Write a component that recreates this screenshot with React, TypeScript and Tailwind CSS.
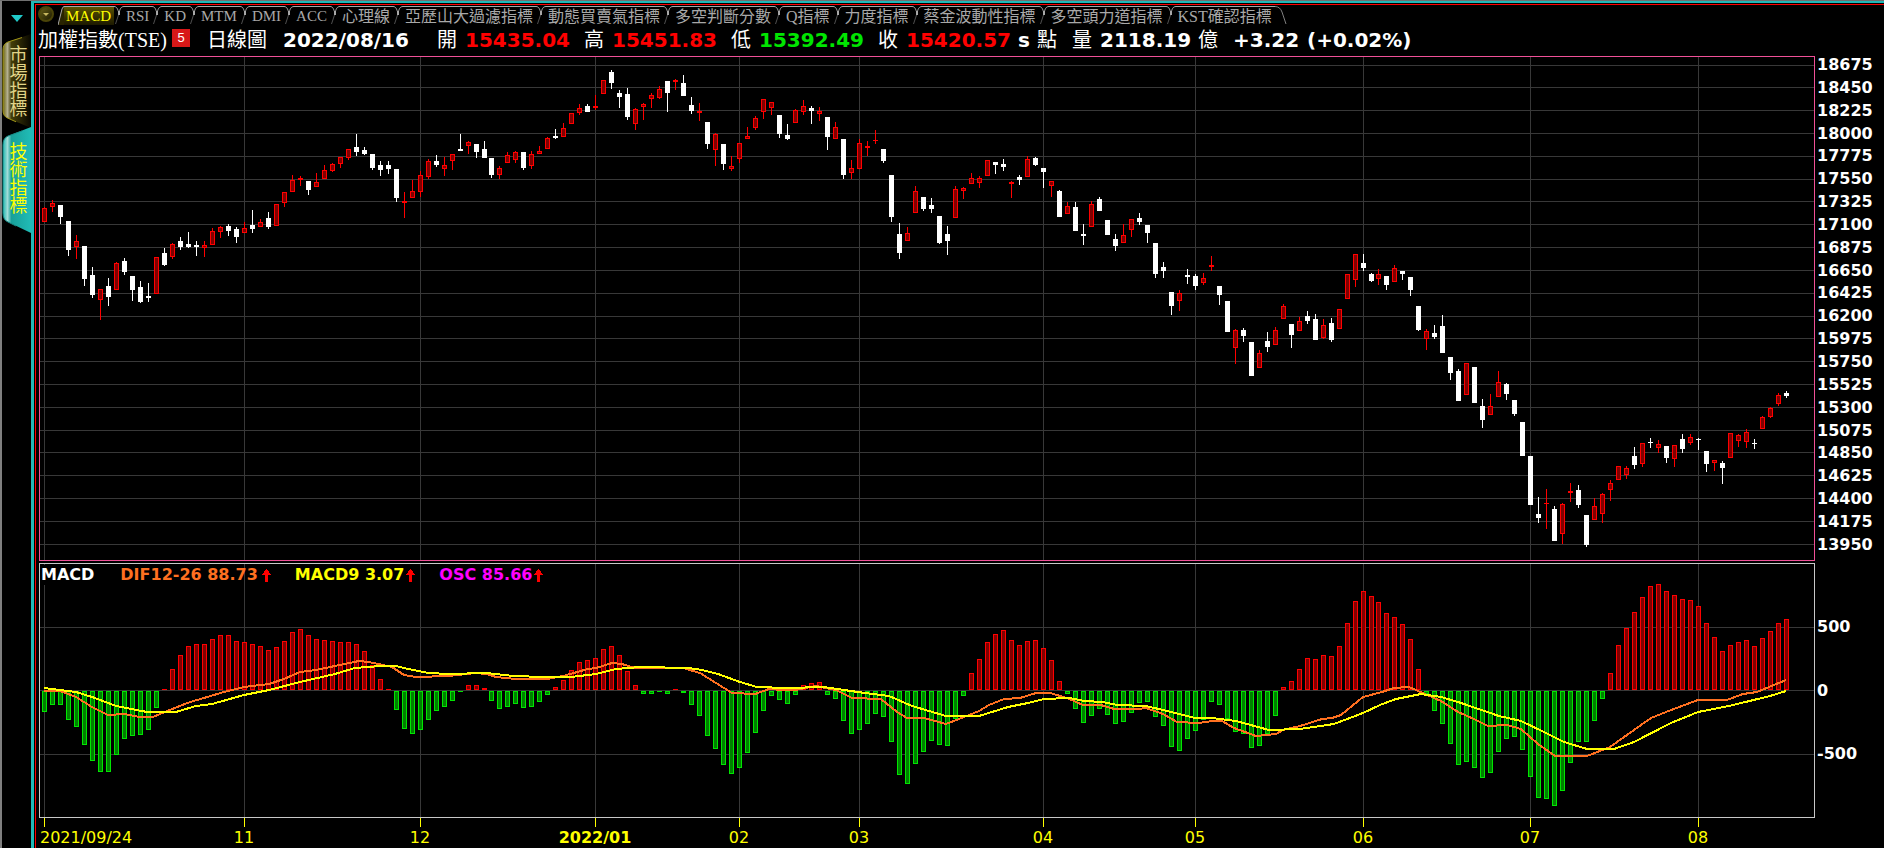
import { useState } from "react";

// one row per trading day: [rising, high, body top, body bottom, low]
const candles = [
  [1, 207, 208, 222, 222], [1, 200, 203, 207, 212], [0, 205, 205, 217, 224], [0, 221, 221, 250, 256],
  [1, 235, 241, 247, 259], [0, 246, 246, 279, 286], [0, 267, 275, 295, 298], [1, 289, 289, 300, 320],
  [0, 278, 286, 297, 306], [1, 262, 263, 290, 290], [0, 258, 261, 272, 275], [0, 276, 276, 290, 301],
  [0, 281, 287, 302, 303], [0, 283, 296, 298, 302], [1, 257, 257, 294, 294], [0, 248, 253, 265, 266],
  [1, 243, 244, 257, 259], [0, 237, 241, 247, 250], [0, 232, 244, 247, 248], [0, 241, 245, 247, 256],
  [1, 241, 245, 248, 257], [1, 228, 231, 245, 245], [1, 226, 227, 232, 238], [0, 224, 226, 231, 236],
  [0, 227, 229, 237, 243], [1, 222, 228, 233, 233], [0, 210, 225, 229, 233], [1, 219, 222, 227, 227],
  [0, 212, 218, 227, 229], [1, 204, 204, 226, 226], [1, 192, 192, 203, 207], [1, 175, 180, 192, 192],
  [1, 176, 178, 180, 186], [0, 181, 181, 190, 195], [1, 173, 182, 187, 187], [1, 165, 170, 179, 179],
  [1, 163, 164, 171, 172], [1, 157, 157, 164, 168], [1, 149, 149, 158, 160], [0, 134, 147, 152, 156],
  [0, 147, 150, 154, 155], [0, 154, 154, 168, 170], [0, 161, 165, 170, 176], [0, 161, 165, 169, 174],
  [0, 169, 169, 198, 202], [1, 192, 201, 203, 218], [1, 180, 191, 198, 198], [1, 171, 175, 192, 197],
  [1, 159, 161, 177, 179], [0, 155, 161, 165, 167], [1, 157, 165, 169, 176], [1, 154, 154, 161, 170],
  [0, 134, 149, 151, 151], [1, 141, 142, 146, 154], [0, 144, 144, 152, 158], [0, 141, 149, 158, 158],
  [0, 158, 158, 175, 178], [1, 166, 168, 175, 179], [1, 152, 155, 163, 163], [1, 151, 152, 160, 163],
  [0, 152, 152, 168, 170], [1, 151, 154, 166, 169], [1, 146, 151, 154, 154], [1, 137, 138, 149, 149],
  [0, 129, 136, 138, 139], [1, 123, 128, 137, 137], [1, 113, 113, 124, 124], [1, 104, 108, 113, 115],
  [0, 104, 106, 112, 112], [1, 95, 106, 108, 110], [1, 80, 80, 94, 94], [0, 70, 72, 83, 89],
  [0, 90, 93, 97, 108], [0, 88, 94, 117, 120], [1, 108, 109, 124, 130], [1, 103, 104, 107, 120],
  [1, 93, 95, 99, 108], [1, 86, 89, 98, 99], [0, 81, 81, 93, 112], [1, 79, 80, 82, 90],
  [0, 75, 83, 96, 96], [0, 97, 105, 111, 114], [1, 103, 111, 113, 121], [0, 122, 122, 144, 149],
  [1, 133, 134, 150, 166], [0, 144, 144, 164, 170], [1, 156, 166, 169, 171], [1, 143, 143, 159, 163],
  [1, 127, 136, 139, 139], [1, 116, 118, 128, 130], [1, 99, 99, 112, 119], [1, 102, 102, 108, 115],
  [0, 115, 115, 134, 138], [0, 124, 135, 139, 140], [1, 109, 110, 123, 123], [1, 100, 106, 112, 115],
  [0, 106, 108, 111, 124], [1, 107, 111, 114, 121], [0, 117, 117, 137, 150], [1, 122, 127, 139, 139],
  [0, 139, 139, 175, 179], [1, 160, 168, 173, 179], [1, 139, 143, 169, 169], [1, 141, 146, 148, 156],
  [1, 130, 140, 141, 144], [0, 149, 149, 161, 163], [0, 175, 175, 217, 222], [0, 223, 234, 253, 259],
  [1, 227, 233, 241, 241], [1, 186, 191, 213, 213], [0, 197, 197, 209, 211], [0, 198, 205, 209, 213],
  [0, 216, 216, 243, 244], [0, 226, 234, 241, 255], [1, 186, 189, 218, 218], [1, 187, 188, 191, 199],
  [1, 173, 178, 184, 184], [1, 176, 178, 183, 188], [1, 160, 160, 176, 176], [0, 162, 162, 165, 174],
  [0, 159, 164, 167, 171], [1, 181, 182, 184, 198], [0, 175, 177, 180, 185], [1, 156, 159, 177, 177],
  [0, 157, 158, 165, 166], [0, 168, 168, 172, 188], [1, 181, 181, 186, 197], [0, 190, 191, 217, 217],
  [1, 202, 206, 214, 214], [0, 202, 207, 231, 231], [0, 224, 234, 236, 245], [1, 201, 204, 227, 227],
  [0, 197, 199, 211, 211], [0, 220, 220, 235, 235], [0, 234, 239, 246, 251], [1, 224, 235, 243, 243],
  [1, 219, 219, 230, 237], [0, 213, 218, 222, 225], [0, 225, 225, 233, 243], [0, 243, 243, 274, 278],
  [0, 262, 267, 271, 278], [0, 292, 292, 306, 315], [1, 290, 293, 301, 311], [0, 269, 275, 277, 284],
  [0, 274, 276, 286, 290], [1, 273, 278, 283, 285], [1, 256, 265, 267, 271], [0, 286, 286, 295, 305],
  [0, 301, 301, 332, 332], [1, 329, 330, 348, 364], [0, 328, 330, 336, 342], [0, 342, 342, 376, 376],
  [1, 350, 353, 368, 368], [0, 332, 341, 347, 352], [1, 327, 330, 345, 345], [1, 304, 306, 319, 319],
  [0, 324, 324, 335, 348], [1, 317, 321, 331, 331], [0, 311, 316, 321, 324], [0, 314, 319, 340, 340],
  [1, 319, 325, 338, 339], [0, 318, 323, 340, 342], [1, 309, 309, 329, 329], [1, 274, 274, 299, 299],
  [1, 254, 254, 280, 287], [0, 254, 263, 268, 271], [0, 273, 274, 281, 282], [1, 269, 274, 279, 285],
  [0, 276, 276, 285, 290], [1, 265, 268, 282, 282], [0, 271, 271, 274, 280], [0, 277, 277, 290, 296],
  [0, 306, 306, 330, 331], [1, 329, 331, 339, 350], [0, 325, 333, 337, 339], [0, 315, 326, 353, 353],
  [0, 357, 357, 373, 380], [0, 369, 371, 401, 401], [1, 363, 363, 395, 395], [0, 367, 367, 403, 403],
  [0, 399, 406, 420, 428], [1, 394, 406, 415, 415], [1, 371, 382, 397, 397], [0, 383, 384, 394, 400],
  [0, 400, 400, 414, 416], [0, 422, 422, 456, 456], [0, 456, 456, 505, 505], [0, 497, 514, 518, 523],
  [1, 489, 503, 504, 529], [0, 506, 509, 541, 541], [1, 503, 504, 534, 544], [1, 483, 491, 493, 502],
  [0, 485, 490, 505, 508], [0, 515, 515, 545, 547], [1, 498, 506, 520, 520], [1, 493, 494, 514, 523],
  [1, 480, 483, 490, 501], [1, 466, 466, 480, 480], [1, 466, 468, 475, 479], [0, 447, 456, 465, 469],
  [1, 443, 443, 464, 467], [0, 438, 442, 443, 448], [1, 440, 444, 448, 453], [0, 446, 446, 458, 463],
  [1, 445, 445, 459, 467], [0, 434, 439, 449, 453], [1, 434, 437, 443, 445], [0, 438, 439, 440, 450],
  [0, 451, 451, 464, 472], [1, 460, 460, 463, 471], [0, 461, 463, 468, 484], [1, 433, 433, 458, 458],
  [1, 434, 435, 441, 447], [1, 429, 432, 442, 448], [0, 439, 443, 444, 449], [1, 416, 417, 429, 429],
  [1, 407, 408, 417, 418], [1, 393, 395, 404, 406], [0, 391, 393, 396, 398],
];

const osc = [
  -22, -15, -15, -30, -37, -55, -71, -82, -82, -65, -49, -46, -45, -40, -18, 1, 21, 35, 44, 46,
  46, 51, 55, 55, 49, 48, 46, 44, 40, 43, 49, 58, 61, 55, 51, 50, 49, 48, 48, 46,
  39, 25, 11, 1, -20, -39, -44, -40, -30, -21, -17, -11, -2, 5, 5, 2, -11, -19, -17, -14,
  -18, -17, -12, -5, 3, 10, 20, 28, 30, 32, 41, 44, 35, 19, 5, -4, -4, -2, -4, 1,
  -3, -15, -26, -46, -59, -75, -84, -78, -63, -43, -21, -6, -10, -14, -5, 5, 7, 8, -5, -9,
  -31, -44, -40, -34, -24, -27, -52, -85, -94, -74, -62, -51, -55, -56, -29, -6, 17, 31, 48, 56,
  60, 50, 45, 49, 50, 42, 30, 9, -4, -19, -33, -26, -19, -25, -34, -32, -23, -13, -12, -27,
  -36, -57, -61, -49, -41, -30, -12, -15, -29, -42, -44, -58, -56, -44, -26, 3, 9, 21, 32, 31,
  35, 34, 44, 67, 89, 99, 94, 88, 77, 73, 66, 51, 21, -4, -21, -34, -54, -75, -72, -78,
  -88, -83, -62, -49, -47, -60, -87, -108, -109, -116, -101, -73, -52, -52, -31, -9, 17, 45, 62, 78,
  93, 104, 106, 99, 95, 91, 90, 84, 67, 53, 39, 45, 48, 50, 44, 52, 59, 67, 71,
];

const dif =
  "44,691 60,691 76,697 92,707 108,715 124,714 140,717 153,717 167,711 190,702 204,698 224,692 244,687 269,684 284,679 300,672 316,670 335,666 359,661 369,662 392,667 404,675 416,677 449,676 476,673 486,674 496,677 516,679 547,679 563,676 588,669 596,668 612,663 622,664 635,668 683,668 700,673 716,683 732,693 755,694 769,689 783,690 795,690 816,686 836,690 852,698 881,699 897,712 907,718 924,718 946,724 959,719 979,711 989,705 1004,699 1020,698 1036,693 1050,693 1067,698 1083,705 1101,705 1114,709 1138,709 1146,708 1163,714 1177,722 1199,723 1212,721 1222,721 1234,728 1256,736 1276,734 1283,730 1300,726 1322,719 1332,718 1341,715 1363,697 1382,692 1394,688 1409,687 1425,694 1441,701 1458,712 1474,719 1488,726 1507,725 1521,729 1538,744 1555,756 1587,756 1610,747 1634,730 1651,718 1671,710 1698,700 1727,700 1743,694 1757,692 1786,680";

const macd9 =
  "44,688 76,692 92,697 116,706 147,712 176,712 196,706 212,704 244,695 269,690 300,682 335,674 355,668 380,666 396,666 408,669 429,673 449,674 486,673 514,676 543,677 571,677 596,674 616,669 640,667 689,668 702,670 718,674 740,682 757,687 787,688 824,687 844,690 865,693 889,696 912,706 946,716 979,716 1008,707 1028,703 1044,699 1069,698 1085,701 1102,702 1118,705 1146,706 1167,711 1195,718 1212,718 1236,721 1269,730 1300,729 1334,724 1363,713 1380,705 1396,699 1421,694 1441,697 1458,702 1499,716 1521,721 1544,732 1564,742 1587,749 1614,749 1634,742 1671,723 1698,712 1729,706 1770,696 1786,691";

const tabs = [
  "MACD", "RSI", "KD", "MTM", "DMI", "ACC", "心理線", "亞歷山大過濾指標", "動態買賣氣指標", "多空判斷分數",
  "Q指標", "力度指標", "蔡金波動性指標", "多空頭力道指標", "KST確認指標",
];

const months = [
  { label: "2021/09/24", x: 44 },
  { label: "11", x: 244 },
  { label: "12", x: 420 },
  { label: "2022/01", x: 595, bold: true },
  { label: "02", x: 739 },
  { label: "03", x: 859 },
  { label: "04", x: 1043 },
  { label: "05", x: 1195 },
  { label: "06", x: 1363 },
  { label: "07", x: 1530 },
  { label: "08", x: 1698 },
];

const quotes = [
  { label: "開", value: "15435.04", color: "text-[#ff0000]" },
  { label: "高", value: "15451.83", color: "text-[#ff0000]" },
  { label: "低", value: "15392.49", color: "text-[#00e600]" },
];

const prices = Array.from({ length: 22 }, (_, i) => 18675 - i * 225);

const RIGHT = 1814;
const ZERO = 690;

// days are slightly less than 8 units apart
const dayX = (i: number) => 44 + i * 8 - Math.floor((i + 55) / 111);
const priceY = (p: number) => Math.floor(65.1 + ((18675 - p) * 479) / 4725);

function MonthLines({ top, height }: { top: number; height: number }) {
  return (
    <>
      {months.map((m) => (
        <rect key={m.x} x={m.x} y={top} width={1} height={height} fill="#383838" />
      ))}
    </>
  );
}

function PriceChart() {
  return (
    <svg
      viewBox="40 57 1774 503"
      preserveAspectRatio="none"
      shapeRendering="crispEdges"
      className="block w-full h-[503px]"
    >
      {prices.map((p) => (
        <rect key={p} x={40} y={priceY(p)} width={RIGHT - 40} height={1} fill="#383838" />
      ))}
      <MonthLines top={57} height={503} />
      {candles.map(([up, high, top, bottom, low], i) => {
        const x = dayX(i);
        const color = up ? "#ff0000" : "#ffffff";
        return (
          <g key={i}>
            <rect x={x} y={high} width={1} height={low - high} fill={color} />
            <rect x={x - 2} y={top} width={5} height={bottom - top} fill={color} />
            {up && bottom - top > 2 ? (
              <rect x={x - 1} y={top + 1} width={3} height={bottom - top - 2} fill="#800000" />
            ) : null}
          </g>
        );
      })}
    </svg>
  );
}

function MacdChart() {
  return (
    <svg
      viewBox="40 564 1774 253"
      preserveAspectRatio="none"
      shapeRendering="crispEdges"
      className="block w-full h-[253px]"
    >
      {[627, ZERO, 754].map((y) => (
        <rect key={y} x={40} y={y} width={RIGHT - 40} height={1} fill="#383838" />
      ))}
      <MonthLines top={564} height={253} />
      {osc.map((v, i) => {
        const x = dayX(i) - 2;
        const up = v > 0;
        const y = up ? ZERO - v : ZERO + 1;
        const h = up ? v : -v - 1;
        return (
          <g key={i}>
            <rect x={x} y={y} width={5} height={h} fill={up ? "#ff0000" : "#00e600"} />
            {h > 2 && (
              <rect x={x + 1} y={y + 1} width={3} height={h - 2} fill={up ? "#800000" : "#008000"} />
            )}
          </g>
        );
      })}
      <polyline points={dif} fill="none" stroke="#ff7020" strokeWidth={2} />
      <polyline points={macd9} fill="none" stroke="#ffff00" strokeWidth={2} />
    </svg>
  );
}

function UpArrow() {
  return (
    <svg width="9" height="13" viewBox="0 0 9 13" shapeRendering="crispEdges">
      <path d="M4 0h1l4 6H6v7H3V6H0z" fill="#ff0000" />
    </svg>
  );
}

function TabJoint() {
  return (
    <svg width="10" height="19" viewBox="0 0 10 19" className="shrink-0">
      <path d="M0 .5C3 .5 3.500 3 5 7C6 3 7 .5 10 .5" fill="none" stroke="#a8a8a8" />
      <path d="M5 5v4" stroke="#a8a8a8" strokeWidth="2" />
      <path d="M4.500 9L1.500 18" stroke="#505050" />
    </svg>
  );
}

function SideTab({ label, active, onClick }: { label: string; active: boolean; onClick: () => void }) {
  return (
    <button
      onClick={onClick}
      className={
        "relative flex items-center justify-center w-[29px] text-[18px] leading-[18px] [writing-mode:vertical-rl] " +
        (active ? "h-[106px] -mt-px pb-1 text-[#ffff00]" : "h-[94px] text-[#e0d488]")
      }
    >
      <svg viewBox="0 0 29 106" preserveAspectRatio="none" className="absolute inset-0 w-full h-full">
        <defs>
          <linearGradient id="on" x1="0" x2="1">
            <stop offset="0" stopColor="#20b8b0" />
            <stop offset=".16" stopColor="#a0dcd8" />
            <stop offset=".3" stopColor="#18a09a" />
            <stop offset="1" stopColor="#20bcb6" />
          </linearGradient>
          <linearGradient id="off" x1="0" x2="1">
            <stop offset="0" stopColor="#6c6410" />
            <stop offset=".16" stopColor="#b4b090" />
            <stop offset=".3" stopColor="#443e08" />
            <stop offset="1" stopColor="#080700" />
          </linearGradient>
        </defs>
        <path
          d="M29 0L6 9Q1 11 1 18V86Q1 93 6 95L29 106Z"
          fill={active ? "url(#on)" : "url(#off)"}
        />
        <path
          d="M20 4L6 9Q1 11 1 18V86Q1 93 6 95L14 99"
          fill="none"
          stroke={active ? "#188c88" : "#a89c18"}
        />
      </svg>
      <span className="relative">{label}</span>
    </button>
  );
}

export default function App() {
  const [tab, setTab] = useState("MACD");
  const [side, setSide] = useState("技術指標");

  return (
    <div className="min-h-screen flex flex-col bg-black text-white overflow-hidden border-t border-[#707070] font-['Liberation_Serif','Noto_Sans_CJK_TC',serif]">
      <div className="flex-1 flex">
        {/* Sidebar */}
        <aside className="w-[31px] shrink-0 border-l-2 border-[#808080]">
          <button aria-label="選單" className="flex justify-center w-full pt-[14px] h-[33px]">
            <svg width="12" height="7" viewBox="0 0 12 7">
              <path d="M0 0L12 0L6 7Z" fill="#20c8c8" />
            </svg>
          </button>
          <SideTab label="市場指標" active={side === "市場指標"} onClick={() => setSide("市場指標")} />
          <SideTab label="技術指標" active={side === "技術指標"} onClick={() => setSide("技術指標")} />
        </aside>

        <div className="flex-1 min-w-0 flex border-l-[3px] border-t-2 border-[#20b8b8]">
          <main className="flex-1 min-w-0 mt-px ml-px border-l border-t border-[#ff0000]">
            {/* Indicator tabs */}
            <nav className="flex h-5 pt-px pl-0.5">
              <button aria-label="更多指標" className="w-4 h-4 mr-1 shrink-0">
                <svg width="16" height="16" viewBox="0 0 16 16">
                  <defs>
                    <linearGradient id="knob" x1="0" x2="1" y1="0" y2="1">
                      <stop offset="0" stopColor="#6a6218" />
                      <stop offset="1" stopColor="#181600" />
                    </linearGradient>
                  </defs>
                  <circle cx="8" cy="8" r="7" fill="url(#knob)" stroke="#4a4408" strokeWidth="2" />
                  <path d="M5 7h6L8 10z" fill="#c8b860" />
                </svg>
              </button>
              {tabs.map((t, i) => (
                <div key={t} className="flex shrink-0">
                  {i === 0 && (
                    <svg width="6" height="19" viewBox="0 0 6 19">
                      <path d="M0 19L4 3Q5 .5 6 .5V19Z" fill="#282400" />
                      <path d="M0 19L4 3Q5 .5 6 .5" fill="none" stroke="#a8a8a8" />
                    </svg>
                  )}
                  <button
                    onClick={() => setTab(t)}
                    className={
                      "border-t border-[#a8a8a8] pl-0.5 pr-[3px] leading-[19px] whitespace-nowrap " +
                      (/^[A-Z]+$/.test(t) ? "text-[15px] " : "text-[16px] ") +
                      (tab === t
                        ? "text-[#ffff00] bg-linear-to-b from-[#5c5400] to-[#1c1900]"
                        : "text-[#a8a8a8]")
                    }
                  >
                    {t}
                  </button>
                  {i < tabs.length - 1 ? (
                    <TabJoint />
                  ) : (
                    <svg width="12" height="19" viewBox="0 0 12 19">
                      <path d="M0 .5Q5 .5 7 6L11 18" fill="none" stroke="#808080" />
                    </svg>
                  )}
                </div>
              ))}
            </nav>

            {/* Quote line */}
            <header className="flex items-center h-[31px] pb-px pl-0.5 text-[20px] leading-6 whitespace-nowrap">
              <h1 className="w-[134px]">加權指數(TSE)</h1>
              <span className="w-[18px] h-[18px] mb-1 mr-[17px] bg-[#d81818] text-center text-[13px] leading-[18px] font-['Liberation_Sans',sans-serif]">
                5
              </span>
              <span className="w-[76px]">日線圖</span>
              <span className="w-[154px] font-bold font-['DejaVu_Sans',sans-serif]">2022/08/16</span>
              {quotes.map((q) => (
                <span key={q.label} className="flex w-[147px]">
                  <span className="w-7">{q.label}</span>
                  <b className={"font-['DejaVu_Sans',sans-serif] " + q.color}>{q.value}</b>
                </span>
              ))}
              <span className="w-7">收</span>
              <b className="w-[112px] text-[#ff0000] font-['DejaVu_Sans',sans-serif]">15420.57</b>
              <b className="w-[19px] font-['DejaVu_Sans',sans-serif]">s</b>
              <span className="w-[35px]">點</span>
              <span className="w-7">量</span>
              <b className="w-[98px] font-['DejaVu_Sans',sans-serif]">2118.19</b>
              <span className="w-[35px]">億</span>
              <b className="w-[74px] font-['DejaVu_Sans',sans-serif]">+3.22</b>
              <b className="font-['DejaVu_Sans',sans-serif]">(+0.02%)</b>
            </header>

            <div className="pl-[3px] font-['DejaVu_Sans',sans-serif]">
              {/* Price */}
              <section className="flex">
                <div className="flex-1 min-w-0 border border-[#f05098]">
                  <PriceChart />
                </div>
                <div className="w-[69px] pl-0.5 pt-px pb-2 flex flex-col justify-between text-base leading-4 font-bold">
                  {prices.map((p) => (
                    <span key={p}>{p}</span>
                  ))}
                </div>
              </section>

              {/* MACD */}
              <section className="flex mt-0.5">
                <div className="relative flex-1 min-w-0 border border-[#c8c8c8]">
                  <MacdChart />
                  <div className="absolute left-px top-px flex gap-6 text-base leading-5 font-bold whitespace-nowrap">
                    <span className="bg-black pr-0.5">MACD</span>
                    <span className="flex items-center gap-1 text-[#ff7020]">
                      DIF12-26 88.73
                      <UpArrow />
                    </span>
                    <span className="flex items-center gap-0.5 text-[#ffff00]">
                      MACD9 3.07
                      <UpArrow />
                    </span>
                    <span className="flex items-center gap-0.5 text-[#ff00ff]">
                      OSC 85.66
                      <UpArrow />
                    </span>
                  </div>
                </div>
                <div className="w-[69px] pl-0.5 py-14 flex flex-col justify-between text-base leading-4 font-bold">
                  <span>500</span>
                  <span>0</span>
                  <span>-500</span>
                </div>
              </section>

              {/* Dates, one cell per month */}
              <div className="flex pl-[5px] pr-[69px] text-base leading-[22px] text-[#ffff00]">
                {months.map((m, i) => (
                  <div
                    key={m.x}
                    className="min-w-0 basis-0"
                    style={{ flexGrow: (months[i + 1]?.x ?? RIGHT + 1) - m.x }}
                  >
                    <div className="w-px h-[9px] bg-[#ffff00]" />
                    <div
                      className={
                        "w-0 flex whitespace-nowrap " +
                        (i === 0 ? "-ml-1 " : "justify-center ") +
                        (m.bold ? "font-bold" : "")
                      }
                    >
                      {m.label}
                    </div>
                  </div>
                ))}
              </div>
            </div>
          </main>
        </div>
      </div>
    </div>
  );
}
